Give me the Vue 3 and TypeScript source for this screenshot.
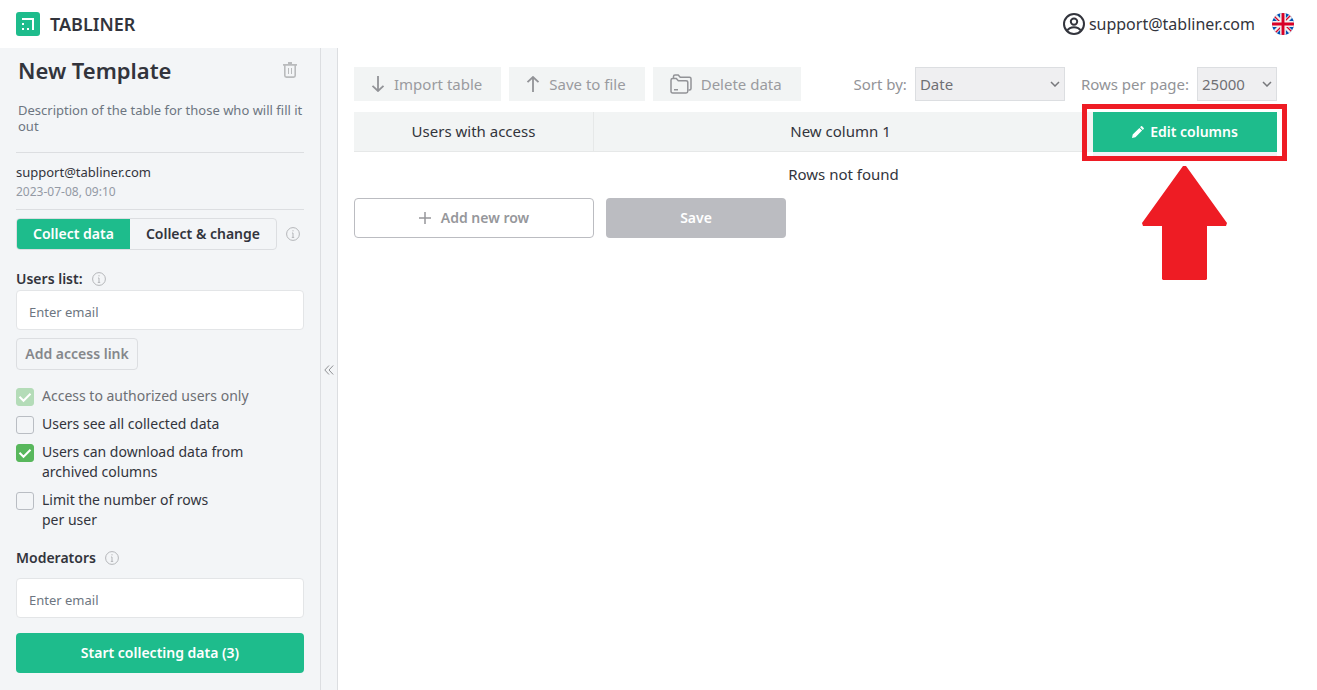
<script setup lang="ts">
import { ref } from 'vue'

interface Option {
  id: string
  label: string
  checked: boolean
  disabled?: boolean
  narrow?: boolean
}

const options = ref<Option[]>([
  { id: 'authorized', label: 'Access to authorized users only', checked: true, disabled: true },
  { id: 'see-all', label: 'Users see all collected data', checked: false },
  { id: 'download', label: 'Users can download data from archived columns', checked: true },
  { id: 'limit', label: 'Limit the number of rows per user', checked: false, narrow: true },
])
const mode = ref<'collect' | 'change'>('collect')
const usersEmail = ref('')
const moderatorEmail = ref('')
const sortBy = ref('Date')
const perPage = ref('25000')
</script>

<template>
  <div class="app">
    <header class="topbar">
      <a class="brand" href="#">
        <svg width="24" height="24" viewBox="0 0 24 24" aria-hidden="true">
          <rect width="24" height="24" rx="3" fill="#1ebc8c" />
          <path d="M6 6h12v12h-2V8H6zM6 11h2v2H6zM6 16h2v2H6zM11 16h2v2h-2z" fill="#fff" />
        </svg>
        <span>TABLINER</span>
      </a>
      <div class="account">
        <a class="user" href="#">
          <svg width="22" height="22" viewBox="0 0 22 22" fill="none" stroke="#32343c" stroke-width="2" aria-hidden="true">
            <circle cx="11" cy="11" r="10" />
            <circle cx="11" cy="8.6" r="3.2" />
            <path d="M4.2 17.6c1.4-2.4 4-3.4 6.800-3.400s5.400 1 6.800 3.400" />
          </svg>
          <span>support@tabliner.com</span>
        </a>
        <button class="plain" type="button" aria-label="Language">
          <svg width="22" height="22" viewBox="0 0 22 22" aria-hidden="true">
            <clipPath id="flag-clip"><circle cx="11" cy="11" r="11" /></clipPath>
            <g clip-path="url(#flag-clip)">
              <rect width="22" height="22" fill="#0052b4" />
              <path d="M1 1l20 20M21 1L1 21" stroke="#f0f0f0" stroke-width="4.400" />
              <path d="M2.500 3.500l7 7M19.500 18.500l-7-7M18.500 2.500l-7 7M3.500 19.500l7-7" stroke="#d80027" stroke-width="1.300" />
              <path d="M11 0v22M0 11h22" stroke="#f0f0f0" stroke-width="5.800" />
              <path d="M11 0v22M0 11h22" stroke="#d80027" stroke-width="2.900" />
            </g>
          </svg>
        </button>
      </div>
    </header>

    <div class="body">
      <aside class="sidebar">
        <div class="title-row">
          <h1>New Template</h1>
          <button class="plain" type="button" aria-label="Delete template">
            <svg width="14" height="16" viewBox="0 0 14 16" fill="none" stroke="#b9bbbd" aria-hidden="true">
              <path d="M0 2.800h14M5 1h4" stroke-width="1.800" />
              <path d="M1.800 3v10.500q0 1.600 1.600 1.600h7.200q1.600 0 1.600-1.600V3" stroke-width="1.600" />
              <path d="M5.500 6v6M8.500 6v6" stroke-width="1" />
            </svg>
          </button>
        </div>
        <p class="description">Description of the table for those who will fill it out</p>
        <div class="meta">
          <div>support@tabliner.com</div>
          <div class="date">2023-07-08, 09:10</div>
        </div>
        <div class="mode-row">
          <div class="segmented">
            <button type="button" :class="{ active: mode === 'collect' }" @click="mode = 'collect'">Collect data</button>
            <button type="button" :class="{ active: mode === 'change' }" @click="mode = 'change'">Collect &amp; change</button>
          </div>
          <svg class="info" viewBox="0 0 14 14" aria-hidden="true">
            <circle cx="7" cy="7" r="6.400" /><path d="M7 6v4.500M6 6h1M5.800 10.400h2.400M6.400 3.800h1.200" />
          </svg>
        </div>

        <div class="label-row users-label">
          <label for="users-email">Users list:</label>
          <svg class="info" viewBox="0 0 14 14" aria-hidden="true">
            <circle cx="7" cy="7" r="6.400" /><path d="M7 6v4.500M6 6h1M5.800 10.400h2.400M6.400 3.800h1.200" />
          </svg>
        </div>
        <input id="users-email" v-model="usersEmail" class="email" type="email" placeholder="Enter email" />
        <button class="access-link" type="button">Add access link</button>

        <ul class="options">
          <li v-for="option in options" :key="option.id" :class="{ disabled: option.disabled, narrow: option.narrow }">
            <input :id="option.id" v-model="option.checked" type="checkbox" :disabled="option.disabled" />
            <svg class="tick" viewBox="0 0 18 18" aria-hidden="true"><path d="M3.500 8.800l4 4 7-7" /></svg>
            <label :for="option.id">{{ option.label }}</label>
          </li>
        </ul>

        <div class="label-row moderators-label">
          <label for="moderator-email">Moderators</label>
          <svg class="info" viewBox="0 0 14 14" aria-hidden="true">
            <circle cx="7" cy="7" r="6.400" /><path d="M7 6v4.500M6 6h1M5.800 10.400h2.400M6.400 3.800h1.200" />
          </svg>
        </div>
        <input id="moderator-email" v-model="moderatorEmail" class="email" type="email" placeholder="Enter email" />
        <button class="start" type="button">Start collecting data (3)</button>
      </aside>

      <button class="collapse" type="button" aria-label="Collapse sidebar">
        <svg width="10" height="10" viewBox="0 0 10 10" fill="none" stroke="#8f9194" aria-hidden="true">
          <path d="M5 0.500L0.800 5 5 9.500M9.200 0.500L5 5l4.200 4.500" />
        </svg>
      </button>

      <main class="content">
        <div class="toolbar">
          <button class="tool" type="button">
            <svg width="14" height="16" viewBox="0 0 14 16" aria-hidden="true"><path d="M7 0v15M1.500 9.800L7 15l5.500-5.200" /></svg>
            <span>Import table</span>
          </button>
          <button class="tool" type="button">
            <svg width="14" height="16" viewBox="0 0 14 16" aria-hidden="true"><path d="M7 16V1M1.500 6.200L7 1l5.500 5.200" /></svg>
            <span>Save to file</span>
          </button>
          <button class="tool" type="button">
            <svg class="folders" width="22" height="20" viewBox="0 0 22 20" aria-hidden="true">
              <path d="M3.500 4.200V2.500q0-1.500 1.500-1.500h3.200l2 2.200h9.300q1.500 0 1.500 1.500v9.800q0 1.500-1.500 1.500h-1" />
              <path d="M1 6.200q0-1.700 1.700-1.700h3.600l2 2.200h7.700q1.800 0 1.800 1.700v8.900q0 1.700-1.700 1.700H2.700Q1 19 1 17.300zM4 15.800h4" />
            </svg>
            <span>Delete data</span>
          </button>
          <div class="selectors">
            <label for="sort">Sort by:</label>
            <span class="select sort">
              <select id="sort" v-model="sortBy"><option>Date</option></select>
              <svg viewBox="0 0 10 6" aria-hidden="true"><path d="M1 1l4 4 4-4" /></svg>
            </span>
            <label class="rows-label" for="rows">Rows per page:</label>
            <span class="select rows">
              <select id="rows" v-model="perPage"><option>25000</option></select>
              <svg viewBox="0 0 10 6" aria-hidden="true"><path d="M1 1l4 4 4-4" /></svg>
            </span>
          </div>
        </div>

        <table class="grid">
          <thead>
            <tr>
              <th class="users-col">Users with access</th>
              <th>New column 1</th>
              <th class="edit-col">
                <div class="edit-wrap">
                  <button class="edit" type="button">
                    <svg width="12" height="12" viewBox="0 0 12 12" fill="#fff" aria-hidden="true">
                      <path d="M0 12l.7-3.400 6.700-6.700 2.700 2.700-6.700 6.700zM8.100 1.200L9 .3q.5-.500 1.100 0l1.600 1.600q.5.600 0 1.100l-.9.900z" />
                    </svg>
                    <span>Edit columns</span>
                  </button>
                  <div class="highlight"></div>
                  <svg class="arrow" width="86" height="114" viewBox="0 0 86 114" aria-hidden="true">
                    <path d="M41 0h3L85 57l-1 3H65v53l-1 1H21l-1-1V60H1l-1-3z" fill="#ee1c24" />
                  </svg>
                </div>
              </th>
            </tr>
          </thead>
        </table>
        <div class="lower">
          <p class="empty">Rows not found</p>
          <div class="actions">
            <button class="add" type="button">
              <svg width="12" height="12" viewBox="0 0 12 12" aria-hidden="true"><path d="M6 0v12M0 6h12" /></svg>
              <span>Add new row</span>
            </button>
            <button class="save" type="button">Save</button>
          </div>
        </div>
      </main>
    </div>
  </div>
</template>

<style>
body {
  margin: 0;
  background: #fff;
}
</style>

<style scoped>
* {
  box-sizing: border-box;
}
.app {
  display: flex;
  flex-direction: column;
  min-height: 100vh;
  color: #32343c;
  font: 15px/20px "Noto Sans", "Open Sans", sans-serif;
}
button,
input,
select {
  font: inherit;
  color: inherit;
}
button {
  padding: 0;
  cursor: pointer;
}
svg {
  flex: none;
}
.topbar {
  display: flex;
  align-items: center;
  justify-content: space-between;
  height: 48px;
  padding: 0 23px 0 16px;
}
.brand,
.user,
.account {
  display: flex;
  align-items: center;
  color: inherit;
  text-decoration: none;
}
.brand {
  gap: 10px;
  font-size: 18px;
  font-weight: 600;
}
.user {
  gap: 4px;
  font-size: 16px;
}
.account {
  gap: 17px;
}
.plain {
  display: flex;
  border: 0;
  background: none;
}
.body {
  display: flex;
  flex: 1;
}
.sidebar {
  display: flex;
  flex-direction: column;
  flex: 0 0 321px;
  padding: 8px 16px 16px;
  border-right: 1px solid #dcdee1;
  background: #f3f5f7;
}
.title-row {
  display: flex;
  align-items: center;
  justify-content: space-between;
  height: 28px;
  padding: 0 7px 0 2px;
}
h1 {
  margin: 0;
  font-size: 22px;
  line-height: 28px;
  font-weight: 600;
}
.description {
  margin: 18px 0 0;
  padding: 0 0 18px 2px;
  border-bottom: 1px solid #dcdee1;
  color: #6d7681;
  font-size: 13px;
  line-height: 16px;
}
.meta {
  padding: 9px 0 7px;
  border-bottom: 1px solid #dcdee1;
  font-size: 13px;
}
.date {
  color: #949aa5;
  font-size: 12px;
}
.mode-row {
  display: flex;
  align-items: center;
  gap: 9px;
  margin-top: 8px;
}
.segmented {
  display: flex;
  width: 261px;
  height: 32px;
  overflow: hidden;
  border: 1px solid #dcdee1;
  border-radius: 4px;
}
.segmented button {
  flex: 1 1 auto;
  border: 0;
  background: none;
  font-size: 14px;
  font-weight: 600;
}
.segmented .active {
  background: #1ebc8c;
  color: #fff;
}
.info {
  width: 14px;
  height: 14px;
  fill: none;
  stroke: #b4b6b9;
}
.label-row {
  display: flex;
  align-items: center;
  gap: 9px;
  font-size: 14px;
  font-weight: 600;
}
.users-label {
  margin-top: 19px;
}
.email {
  width: 100%;
  height: 40px;
  padding: 3px 12px 0;
  border: 1px solid #e3e5e7;
  border-radius: 4px;
  background: #fff;
  font-size: 13px;
}
.email::placeholder {
  color: #6d7681;
  opacity: 1;
}
.users-label + .email {
  margin-top: 1px;
}
.access-link {
  align-self: flex-start;
  width: 122px;
  height: 32px;
  margin-top: 8px;
  border: 1px solid #dcdee1;
  border-radius: 4px;
  background: none;
  color: #85878b;
  font-size: 14px;
  font-weight: 600;
}
.options {
  display: flex;
  flex-direction: column;
  gap: 8px;
  margin: 16px 0 0;
  padding: 0;
  list-style: none;
  font-size: 14px;
}
.options li {
  display: grid;
  grid-template-columns: 18px 216px;
  gap: 8px;
}
.options .narrow {
  grid-template-columns: 18px 180px;
}
.options input,
.tick {
  grid-area: 1 / 1;
  width: 18px;
  height: 18px;
  margin: 2px 0 0;
}
.options input {
  appearance: none;
  border: 1px solid #b9bdc3;
  border-radius: 3px;
}
.options input:checked {
  border-color: #58b75c;
  background: #58b75c;
}
.tick {
  z-index: 1;
  fill: none;
  stroke: #fff;
  stroke-width: 2;
  pointer-events: none;
  visibility: hidden;
}
.options input:checked + .tick {
  visibility: visible;
}
.options .disabled input {
  opacity: 0.4;
}
.options .disabled label {
  color: #6d6f74;
}
.moderators-label {
  margin-top: 18px;
}
.moderators-label + .email {
  margin-top: 10px;
}
.start {
  height: 40px;
  margin-top: 15px;
  border: 0;
  border-radius: 4px;
  background: #1ebc8c;
  color: #fff;
  font-size: 14px;
  font-weight: 600;
}
.collapse {
  display: flex;
  align-items: center;
  justify-content: center;
  flex: 0 0 17px;
  padding-top: 2px;
  border: 0;
  border-right: 1px solid #dcdee1;
  background: #f3f5f7;
}
.content {
  flex: 1;
  min-width: 0;
  padding: 19px 40px 0 16px;
}
.toolbar {
  display: flex;
  gap: 8px;
}
.tool {
  display: flex;
  align-items: center;
  gap: 9px;
  height: 34px;
  padding: 0 19px 0 17px;
  border: 0;
  background: #f2f4f4;
  color: #9a9b9f;
}
.tool svg {
  fill: none;
  stroke: #929397;
  stroke-width: 1.8;
}
.tool .folders {
  stroke-width: 1.5;
}
.selectors {
  display: flex;
  align-items: center;
  gap: 8px;
  margin-left: auto;
  color: #929397;
}
.rows-label {
  margin-left: 8px;
}
.select {
  display: grid;
  align-items: center;
}
.sort {
  width: 150px;
}
.rows {
  width: 80px;
}
.select select,
.select svg {
  grid-area: 1 / 1;
}
.select select {
  width: 100%;
  height: 34px;
  padding: 0 4px;
  appearance: none;
  border: 1px solid #dcdee1;
  border-radius: 0;
  background: #efeff1;
  color: #6f7075;
}
.select svg {
  justify-self: end;
  width: 10px;
  height: 6px;
  margin-right: 5px;
  fill: none;
  stroke: #77787c;
  stroke-width: 1.5;
  pointer-events: none;
}
.grid {
  width: 100%;
  margin-top: 11px;
  border-spacing: 0;
  table-layout: fixed;
}
.grid th {
  height: 40px;
  padding: 0 0 2px;
  border-bottom: 1px solid #e6e8e8;
  background: #f2f4f4;
  font-weight: 400;
}
.grid .users-col {
  width: 240px;
  border-right: 1px solid #e6e8e8;
}
.grid .edit-col {
  width: 190px;
  padding: 0 0 0 6px;
  border: 0;
}
.edit-wrap {
  position: relative;
}
.edit {
  display: flex;
  align-items: center;
  justify-content: center;
  gap: 6px;
  width: 100%;
  height: 40px;
  border: 0;
  background: #1ebc8c;
  box-shadow: 0 4px 0 #f2f2f4;
  color: #fff;
  font-size: 14px;
  font-weight: 600;
}
.highlight {
  position: absolute;
  inset: -8px -10px -9px -11px;
  border: 5px solid #ee1c24;
  pointer-events: none;
}
.arrow {
  position: absolute;
  top: 54px;
  left: 49px;
}
.lower {
  padding-top: 12px;
}
.empty {
  margin: 0;
  padding-left: 56px;
  text-align: center;
}
.actions {
  display: flex;
  gap: 12px;
  margin-top: 14px;
}
.add,
.save {
  height: 40px;
  border-radius: 4px;
  font-size: 14px;
  font-weight: 600;
}
.add {
  display: flex;
  align-items: center;
  justify-content: center;
  gap: 10px;
  width: 240px;
  border: 1px solid #bbbcc1;
  background: #fff;
  color: #96979b;
}
.add svg {
  stroke: #96979b;
  stroke-width: 1.5;
}
.save {
  width: 180px;
  border: 0;
  background: #bbbcc1;
  color: #fff;
}
</style>
